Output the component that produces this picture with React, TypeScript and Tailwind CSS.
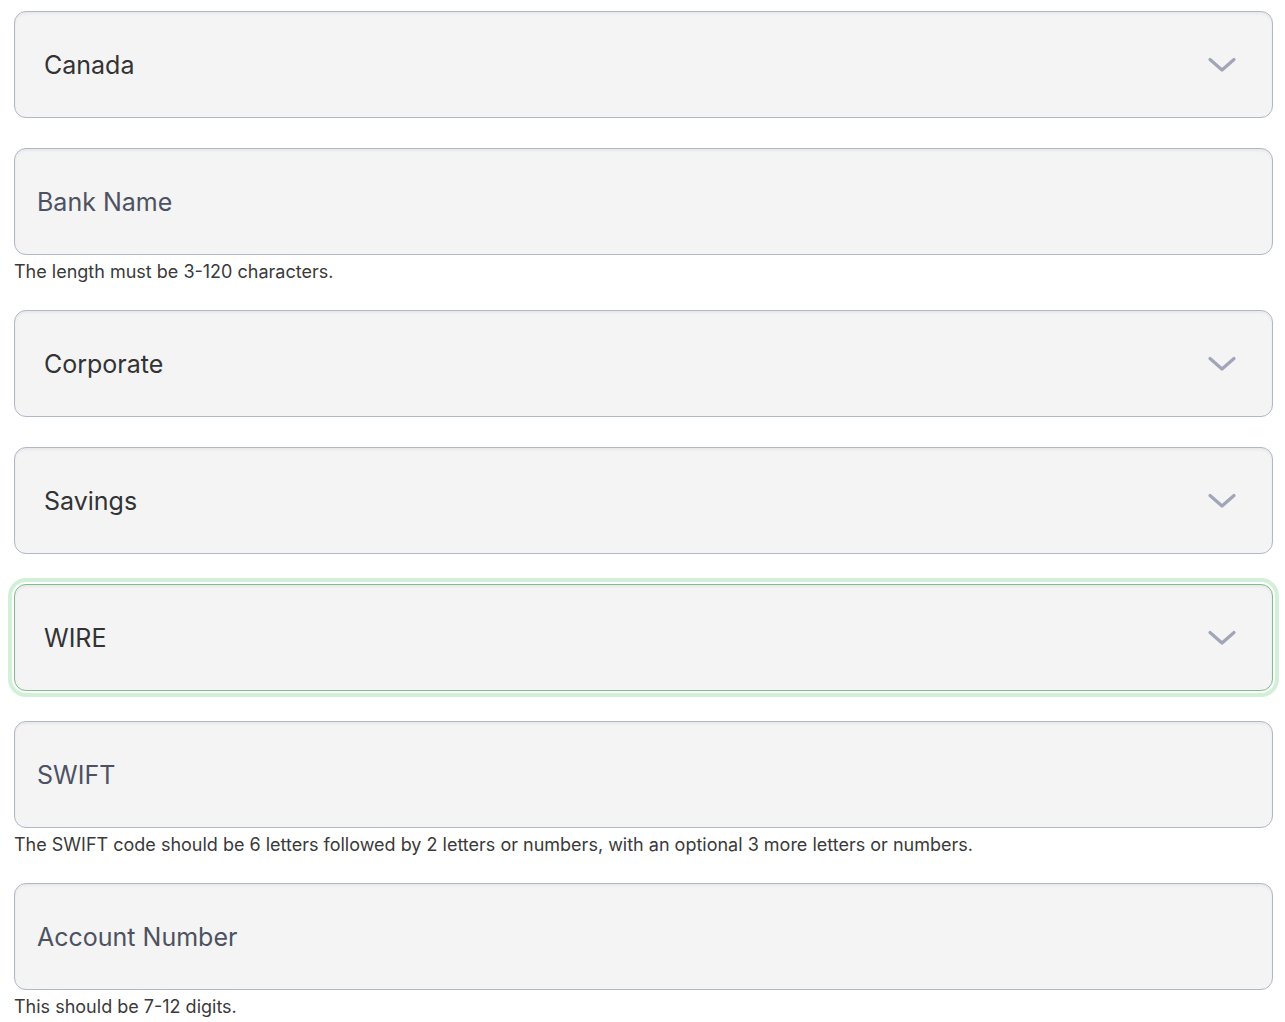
import { ChangeEvent, useState } from 'react'

// ─────────────────────────────────────────────────────────
// FIELDS
// ─────────────────────────────────────────────────────────
type Field =
  | { kind: 'select'; name: string; value: string; options: string[]; focused?: boolean; hint?: string }
  | { kind: 'input'; name: string; placeholder: string; hint?: string }

const FIELDS: Field[] = [
  { kind: 'select', name: 'country', value: 'Canada', options: ['Canada', 'United States', 'Mexico'] },
  { kind: 'input', name: 'bankName', placeholder: 'Bank Name', hint: 'The length must be 3-120 characters.' },
  { kind: 'select', name: 'holderType', value: 'Corporate', options: ['Corporate', 'Individual'] },
  { kind: 'select', name: 'accountType', value: 'Savings', options: ['Savings', 'Checking'] },
  { kind: 'select', name: 'transferType', value: 'WIRE', options: ['WIRE', 'ACH'], focused: true },
  {
    kind: 'input',
    name: 'swift',
    placeholder: 'SWIFT',
    hint: 'The SWIFT code should be 6 letters followed by 2 letters or numbers, with an optional 3 more letters or numbers.',
  },
  { kind: 'input', name: 'accountNumber', placeholder: 'Account Number', hint: 'This should be 7-12 digits.' },
]

const FONT = "font-['Inter','Liberation_Sans',sans-serif]"

function Chevron() {
  return (
    <svg
      width="30"
      height="18"
      viewBox="0 0 30 18"
      fill="none"
      className="pointer-events-none absolute right-[36px] top-1/2 -translate-y-1/2"
    >
      <path d="M3 3.5 L15 14 L27 3.5" stroke="#a0a6b8" strokeWidth="3.2" strokeLinecap="round" strokeLinejoin="round" />
    </svg>
  )
}

function SelectField({ field, value, onChange }: { field: Extract<Field, { kind: 'select' }>; value: string; onChange: (v: string) => void }) {
  return (
    <div
      className={
        field.focused
          ? 'relative rounded-[12px] ring-4 ring-[#d2f0d8] ring-offset-2 ring-offset-white'
          : 'relative rounded-[12px]'
      }
    >
      <select
        name={field.name}
        value={value}
        onChange={(e: ChangeEvent<HTMLSelectElement>) => onChange(e.target.value)}
        className={
          (field.focused ? 'border-[#7fbe8b] ' : 'border-[#b0b7c8] ') +
          'block w-full h-[107px] appearance-none rounded-[12px] border bg-[#f4f4f4] pl-[29px] pr-[80px] pt-[2px] text-[25px] text-[#333333] outline-none shadow-[inset_0_2px_3px_rgba(0,0,0,0.05)]'
        }
      >
        {field.options.map((o) => (
          <option key={o} value={o}>
            {o}
          </option>
        ))}
      </select>
      <Chevron />
    </div>
  )
}

export default function App() {
  const [values, setValues] = useState<Record<string, string>>(() => {
    const init: Record<string, string> = {}
    FIELDS.forEach((f) => {
      init[f.name] = f.kind === 'select' ? f.value : ''
    })
    return init
  })

  const set = (name: string, v: string) => setValues((prev) => ({ ...prev, [name]: v }))

  return (
    <div className={`${FONT} bg-white min-h-screen pl-[14px] pr-[12px] pt-[11px]`}>
      <form className="flex flex-col gap-[30px]" onSubmit={(e) => e.preventDefault()}>
        {FIELDS.map((f) => (
          <div key={f.name}>
            {f.kind === 'select' ? (
              <SelectField field={f} value={values[f.name]} onChange={(v) => set(f.name, v)} />
            ) : (
              <input
                name={f.name}
                value={values[f.name]}
                onChange={(e) => set(f.name, e.target.value)}
                placeholder={f.placeholder}
                className="block w-full h-[107px] rounded-[12px] border border-[#b0b7c8] bg-[#f4f4f4] px-[22px] text-[25px] text-[#333333] placeholder:text-[#4d5262] outline-none shadow-[inset_0_2px_3px_rgba(0,0,0,0.05)]"
              />
            )}
            {f.hint && (
              <p className="mt-[6px] -mb-[3px] text-[18px] leading-[22px] text-[#3a3a3a]">{f.hint}</p>
            )}
          </div>
        ))}
      </form>
    </div>
  )
}
